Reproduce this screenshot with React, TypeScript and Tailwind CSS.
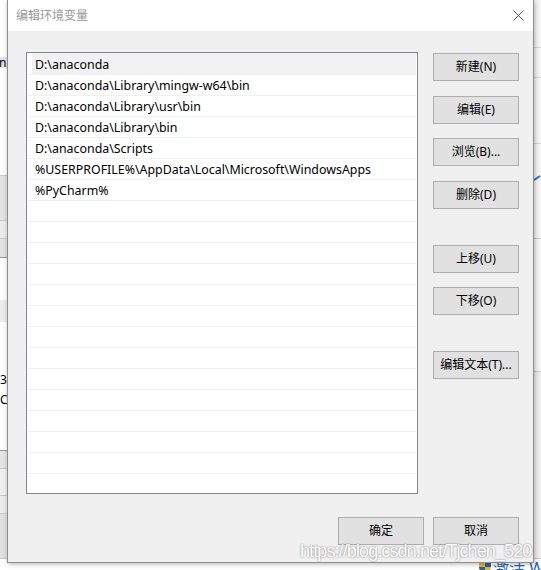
const paths = [
  "D:\\anaconda",
  "D:\\anaconda\\Library\\mingw-w64\\bin",
  "D:\\anaconda\\Library\\usr\\bin",
  "D:\\anaconda\\Library\\bin",
  "D:\\anaconda\\Scripts",
  "%USERPROFILE%\\AppData\\Local\\Microsoft\\WindowsApps",
  "%PyCharm%",
];

const font = "font-['Noto_Sans','Noto_Sans_CJK_SC',sans-serif]";

function Btn({ label, className = "" }: { label: string; className?: string }) {
  return (
    <div
      className={`flex h-[28px] w-[86px] items-center justify-center border border-[#adadad] bg-[#e1e1e1] text-[12px] text-black ${className}`}
    >
      {label}
    </div>
  );
}

function Band({ h, bg = "bg-white", line = false, children }: { h: string; bg?: string; line?: boolean; children?: React.ReactNode }) {
  return (
    <div className={`${h} ${bg} ${line ? "border-t border-[#c8c8c8]" : ""} overflow-hidden whitespace-nowrap text-[12px] leading-none text-black`}>
      {children}
    </div>
  );
}

export default function App() {
  const rows = Array.from({ length: 21 }, (_, i) => paths[i] ?? "");

  return (
    <div className={`relative h-[570px] w-[541px] overflow-hidden bg-white ${font}`}>
      {/* desktop / window behind */}
      <div className="flex h-[558px]">
        <div className="flex w-[7px] flex-col">
          <Band h="h-[57px]" />
          <Band h="h-[11px]" bg="bg-[#e5e5e5]">
            <span className="-ml-[1px] inline-block">n:</span>
          </Band>
          <Band h="h-[107px]" />
          <Band h="h-[45px]" bg="bg-[#e3e3e3]" line />
          <Band h="h-[18px]" bg="bg-[#ececec]" line />
          <Band h="h-[19px]" bg="bg-[#e3e3e3]" line />
          <div className="h-[43px] border-t border-[#999]" />
          <Band h="h-[22px]" bg="bg-[#ececec]" />
          <div className="flex h-[128px] flex-col bg-white pt-[48px] text-[12px] leading-[20px]">
            <span>3</span>
            <span>C</span>
          </div>
          <div className="h-[18px] border-t border-[#999] bg-[#e5e5e5]" />
          <Band h="h-[27px]" bg="bg-[#f0f0f0]" line />
          <Band h="h-[18px]" bg="bg-[#ececec]" line />
          <Band h="h-[45px]" bg="bg-[#e0e0e0]" line />
        </div>
        <div className="flex-1" />
        <div className="flex w-[8px] flex-col bg-[#f7f7f7]">
          <div className="h-[47px]" />
          <div className="h-[30px] border-t border-[#d9d9d9]" />
          <div className="h-[66px] border-t border-[#d9d9d9]" />
          <div className="h-[95px] border-t border-[#d9d9d9] pt-[30px]">
            <svg width="8" height="8" viewBox="0 0 8 8">
              <path d="M1 6 L7 2" stroke="#1d6fd0" strokeWidth="2" />
            </svg>
          </div>
          <div className="h-[133px] border-t border-[#cccccc]" />
          <div className="flex-1 border-t border-[#cccccc] bg-[#f0f0f0]" />
        </div>
      </div>
      <div className="flex h-[12px] items-start whitespace-nowrap border-t border-[#c8c8c8] bg-white pl-[478px] pt-[1px]">
        <svg width="14" height="14" viewBox="0 0 14 14" className="mr-[1px] shrink-0">
          <path d="M7 0 L13 2 V7 C13 10 10 12.5 7 14 C4 12.5 1 10 1 7 V2 Z" fill="#f3b31a" />
          <path d="M7 0 L13 2 V7 H7 Z" fill="#1e63c4" />
          <path d="M1 7 H7 V14 C4 12.5 1 10 1 7 Z" fill="#1e63c4" />
        </svg>
        <span className="shrink-0 text-[16px] leading-[16px] text-[#1e63c4]">激活 Windows</span>
      </div>

      {/* dialog window */}
      <div className="absolute left-[7px] top-0 flex h-[563px] w-[527px] flex-col border-x border-b border-[#8f8f8f] bg-[#f0f0f0] shadow-[1px_1px_5px_rgba(0,0,0,0.3)]">
        <div className="flex h-[31px] shrink-0 items-center justify-between bg-white pl-[8px] pr-[9px]">
          <span className="text-[12px] text-[#999]">编辑环境变量</span>
          <svg width="11" height="11" viewBox="0 0 11 11">
            <path d="M0.5 0.5 L10.5 10.5 M10.5 0.5 L0.5 10.5" stroke="#555" strokeWidth="1" />
          </svg>
        </div>

        <div className="flex pl-[18px] pr-[14px] pt-[21px]">
          <div className="h-[442px] w-[392px] overflow-hidden border border-[#828790] bg-white">
            {rows.map((p, i) => (
              <div
                key={i}
                className={`mx-px h-[21px] ${i === 0 ? "" : "border-t border-[#f0f0f0]"}`}
              >
                <div
                  className={`flex h-full items-center pt-[3px] text-[12.4px] text-black ${
                    i === 0 ? "ml-[4px] bg-[#f2f2f2] pl-[3px] pt-[4px]" : "pl-[7px]"
                  }`}
                >
                  {p}
                </div>
              </div>
            ))}
          </div>

          <div className="ml-[15px] mt-px flex flex-col">
            <Btn label="新建(N)" />
            <Btn label="编辑(E)" className="mt-[15px]" />
            <Btn label="浏览(B)..." className="mt-[14px]" />
            <Btn label="删除(D)" className="mt-[15px]" />
            <Btn label="上移(U)" className="mt-[36px]" />
            <Btn label="下移(O)" className="mt-[14px]" />
            <Btn label="编辑文本(T)..." className="mt-[36px]" />
          </div>
        </div>

        <div className="mt-[23px] flex justify-end gap-[9px] pr-[14px]">
          <Btn label="确定" />
          <Btn label="取消" />
        </div>
      </div>

      {/* watermark */}
      <div className="absolute left-[300px] top-[538px] whitespace-nowrap font-['Liberation_Sans',sans-serif] text-[18px] tracking-[-0.9px] text-white [text-shadow:0_0_2px_rgba(0,0,0,0.55)]">
        https://blog.csdn.net/Tjchen_520
      </div>
    </div>
  );
}
